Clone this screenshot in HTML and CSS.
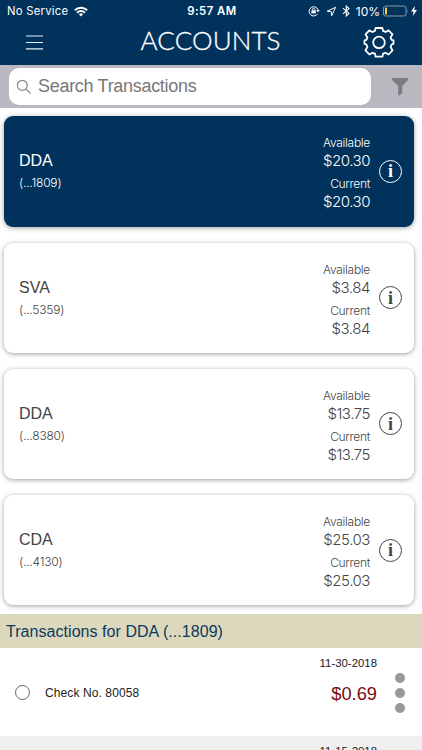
FILE: index.html
```html
<!DOCTYPE html>
<html lang="en">
<head>
	<meta charset="UTF-8" />
	<meta name="viewport" content="width=device-width, initial-scale=1.0" />
	<title>Accounts</title>
	<link rel="stylesheet" href="styles.css">
</head>
<body>
<header class="header">
	<div class="status">
		<div class="status-left">
			<span class="carrier">No Service</span>
			<svg width="14" height="11" viewBox="0 0 14 11" fill="none" stroke="#fff" stroke-width="2"><path d="M.8 4.2a9 9 0 0 1 12.4 0M3.1 6.7a5.6 5.6 0 0 1 7.8 0"/><path d="M7 10.5 4.9 8.3a3 3 0 0 1 4.2 0z" fill="#fff" stroke="none"/></svg>
		</div>
		<span class="clock">9:57 AM</span>
		<div class="status-right">
			<svg width="12" height="12" viewBox="0 0 12 12" fill="none" stroke="#fff"><path d="M9.6 8.8A4.6 4.6 0 1 1 10.1 5"/><path d="M8.3 5.1h3.4L10 7.4z" fill="#fff" stroke="none"/><path d="M3.4 5.4h4.4v3H3.4z" fill="#fff" stroke="none"/><path d="M4.4 5.7V4.5a1.2 1.2 0 0 1 2.4 0v1.2"/></svg>
			<svg class="loc" width="11" height="11" viewBox="0 0 11 11" fill="none" stroke="#fff" stroke-linejoin="round"><path d="M9.6 1.3 1.2 5.2l4 .5.5 4z"/></svg>
			<svg class="bt" width="9" height="12" viewBox="0 0 9 12" fill="none" stroke="#fff" stroke-width="1.1"><path d="M1 3.2l6 5.2-2.7 2.5V1.1L7 3.5 1 8.8"/></svg>
			<span class="percent">10%</span>
			<svg width="27" height="12" viewBox="0 0 27 12"><rect x=".5" y="1" width="22.5" height="10" rx="2" fill="none" stroke="#8796a8"/><rect x="2" y="2.6" width="2" height="6.8" rx=".5" fill="#f3d02f"/><path d="M24.3 4.5q1.5 1.5 0 3z" fill="#8796a8"/></svg>
			<svg width="6" height="10" viewBox="0 0 6 10"><path d="M3.9 0 0 5.6h2.5L1.8 10 6 4.1H3.4z" fill="#fff"/></svg>
		</div>
	</div>
	<div class="nav">
		<svg class="menu" width="17" height="15" viewBox="0 0 17 15" stroke="#e8f1f8" stroke-width="1.2"><path d="M0 1h17M0 7.5h17M0 13.8h17"/></svg>
		<h1>ACCOUNTS</h1>
		<svg class="gear" width="32" height="32" viewBox="0 0 32 32" fill="none" stroke="#fff" stroke-width="1.8" stroke-linejoin="round"><path d="M12.6 2h6.8l.6 2.8q1.3.4 2.7 1.2l2.9-1.6 3.9 3.9-1.9 3.3 1 2.2 1.9.5v3.6l-1.9.6-1 2.6 1.9 3.2-3.9 4.2-3.2-1.8q-1.2.7-2.4 1l-.6 3h-6.8l-.6-3q-1.2-.3-2.4-1l-3.2 1.8-3.9-4.2 1.9-3.2-1-2.6-1.9-.6v-3.6l1.9-.5 1-2.2-1.9-3.3 3.9-3.9L9.3 6q1.4-.8 2.7-1.2z"/><circle cx="16" cy="16.4" r="5.8"/></svg>
	</div>
</header>

<div class="search-bar">
	<div class="search-input">
		<svg width="16" height="16" viewBox="0 0 16 16" fill="none" stroke="#858585" stroke-width="1.2"><circle cx="6.3" cy="6.3" r="5"/><path d="m10 10 4.7 4.7"/></svg>
		<span>Search Transactions</span>
	</div>
	<div class="filter">
		<svg width="18" height="18" viewBox="0 0 18 18" fill="#7d7d80"><path d="M.8 0h16.4v1.7L11.3 8v7.3L7.2 18V8L.8 1.7z"/></svg>
	</div>
</div>

<main class="accounts">
	<section class="card active">
		<div class="account">
			<h2>DDA</h2>
			<p>(...1809)</p>
		</div>
		<div class="balances">
			<span class="label">Available</span>
			<span class="amount">$20.30</span>
			<span class="label">Current</span>
			<span class="amount">$20.30</span>
		</div>
		<span class="info">i</span>
	</section>
	<section class="card">
		<div class="account">
			<h2>SVA</h2>
			<p>(...5359)</p>
		</div>
		<div class="balances">
			<span class="label">Available</span>
			<span class="amount">$3.84</span>
			<span class="label">Current</span>
			<span class="amount">$3.84</span>
		</div>
		<span class="info">i</span>
	</section>
	<section class="card">
		<div class="account">
			<h2>DDA</h2>
			<p>(...8380)</p>
		</div>
		<div class="balances">
			<span class="label">Available</span>
			<span class="amount">$13.75</span>
			<span class="label">Current</span>
			<span class="amount">$13.75</span>
		</div>
		<span class="info">i</span>
	</section>
	<section class="card">
		<div class="account">
			<h2>CDA</h2>
			<p>(...4130)</p>
		</div>
		<div class="balances">
			<span class="label">Available</span>
			<span class="amount">$25.03</span>
			<span class="label">Current</span>
			<span class="amount">$25.03</span>
		</div>
		<span class="info">i</span>
	</section>
</main>

<h3 class="section-title">Transactions for DDA (...1809)</h3>
<div class="transaction">
	<span class="radio"></span>
	<span class="desc">Check No. 80058</span>
	<div class="values">
		<span class="date">11-30-2018</span>
		<span class="debit">$0.69</span>
	</div>
	<div class="dots"><i></i><i></i><i></i></div>
</div>
<div class="transaction alt">
	<div class="values">
		<span class="date">11-15-2018</span>
	</div>
</div>
</body>
</html>
```

FILE: styles.css
```css
* {
	box-sizing: border-box;
}
body {
	font-family: "Liberation Sans", Arial, sans-serif;
	background: #fff;
	margin: 0;
	height: 750px;
	overflow: hidden;
}
h1, h2, h3, p {
	margin: 0;
	font-weight: normal;
}
svg {
	display: block;
	flex: none;
}

/* header */
.header {
	height: 65px;
	background: #00325b;
	color: #fff;
}
.status {
	display: grid;
	grid-template-columns: 1fr auto 1fr;
	align-items: center;
	height: 22px;
	padding: 0 5px 0 7px;
	font-family: Inter, sans-serif;
	font-size: 11.3px;
}
.status-left, .status-right {
	display: flex;
	align-items: center;
}
.status-left {
	gap: 6px;
}
.status-right {
	justify-content: flex-end;
}
.carrier {
	letter-spacing: 0.25px;
}
.clock {
	font-weight: 600;
	letter-spacing: 0.5px;
}
.loc {
	margin: 0 5px 0 6px;
}
.bt {
	margin-right: 5px;
}
.percent {
	margin-right: 3px;
	font-size: 12px;
}
.status-right svg:last-child {
	margin-left: 1px;
}
.nav {
	display: grid;
	grid-template-columns: 1fr auto 1fr;
	align-items: center;
	height: 40px;
	padding: 0 27px 0 26px;
}
.nav h1 {
	margin-top: -4px;
	font-family: Lato, sans-serif;
	font-size: 26px;
	font-weight: 300;
	line-height: 36px;
	letter-spacing: 0.1px;
	-webkit-text-stroke: 0.3px #fff;
}
.gear {
	justify-self: end;
}

/* search */
.search-bar {
	display: flex;
	height: 43px;
	padding: 3px 0 3px 9px;
	background: #bab9c1;
}
.search-input {
	display: flex;
	align-items: center;
	gap: 6px;
	width: 362px;
	padding-left: 7px;
	border-radius: 10px;
	background: #fff;
	color: #777;
	font-size: 18px;
	letter-spacing: -0.3px;
}
.filter {
	display: flex;
	flex: 1;
	align-items: center;
	padding-left: 20px;
}

/* account cards */
.accounts {
	display: flex;
	flex-direction: column;
	gap: 16px;
	padding: 8.4px 8px 8.8px 4px;
}
.card {
	display: flex;
	align-items: center;
	height: 110.2px;
	padding: 0 12px 0 15px;
	border-radius: 9px;
	background: #fff;
	box-shadow: 0 1px 5px rgba(0, 0, 0, 0.38);
	color: #444;
}
.account {
	flex: 1;
}
.account h2 {
	font-size: 16px;
	line-height: 22px;
}
.account p {
	margin-top: 2px;
	font-family: Inter, sans-serif;
	font-size: 12px;
	font-weight: 300;
	line-height: 18px;
	letter-spacing: -0.2px;
}
.balances {
	display: flex;
	flex-direction: column;
	align-items: flex-end;
	margin-right: 9px;
	padding-top: 6px;
	font-family: Inter, sans-serif;
	font-weight: 300;
}
.label {
	font-size: 12px;
	line-height: 15px;
	letter-spacing: -0.3px;
}
.amount + .label {
	margin-top: 4px;
}
.amount {
	font-size: 15px;
	line-height: 22px;
	letter-spacing: -0.45px;
}
.info {
	display: flex;
	align-items: center;
	justify-content: center;
	width: 23px;
	height: 23px;
	border: 1.3px solid currentColor;
	border-radius: 50%;
	font: bold 18px/20px "Liberation Serif", serif;
}
.card.active {
	background: #00325b;
	color: #fff;
}

/* transactions */
.section-title {
	height: 34px;
	padding-left: 6px;
	background: #dcd8bd;
	color: #0c385c;
	font-size: 16px;
	line-height: 35px;
	letter-spacing: 0.05px;
}
.transaction {
	display: flex;
	align-items: center;
	height: 88px;
	padding: 0 17px 0 15px;
	background: #fff;
	color: #222;
}
.radio {
	width: 15px;
	height: 15px;
	margin-top: 2px;
	border: 1.5px solid #666;
	border-radius: 50%;
}
.desc {
	flex: 1;
	padding: 3px 0 0 15px;
	font-size: 12px;
	letter-spacing: 0.1px;
}
.values {
	display: flex;
	flex-direction: column;
	align-items: flex-end;
	align-self: flex-start;
	padding-top: 7px;
	margin-right: 18px;
}
.date {
	font-size: 11.4px;
	line-height: 16px;
}
.debit {
	margin-top: 12px;
	color: #7a0c0c;
	font-size: 18.3px;
	line-height: 22px;
}
.dots {
	display: grid;
	gap: 4.6px;
	padding-top: 2px;
}
.dots i {
	width: 10px;
	height: 10px;
	border-radius: 50%;
	background: #999;
}
.transaction.alt {
	justify-content: flex-end;
	background: #efefef;
	padding-right: 27px;
}
```
